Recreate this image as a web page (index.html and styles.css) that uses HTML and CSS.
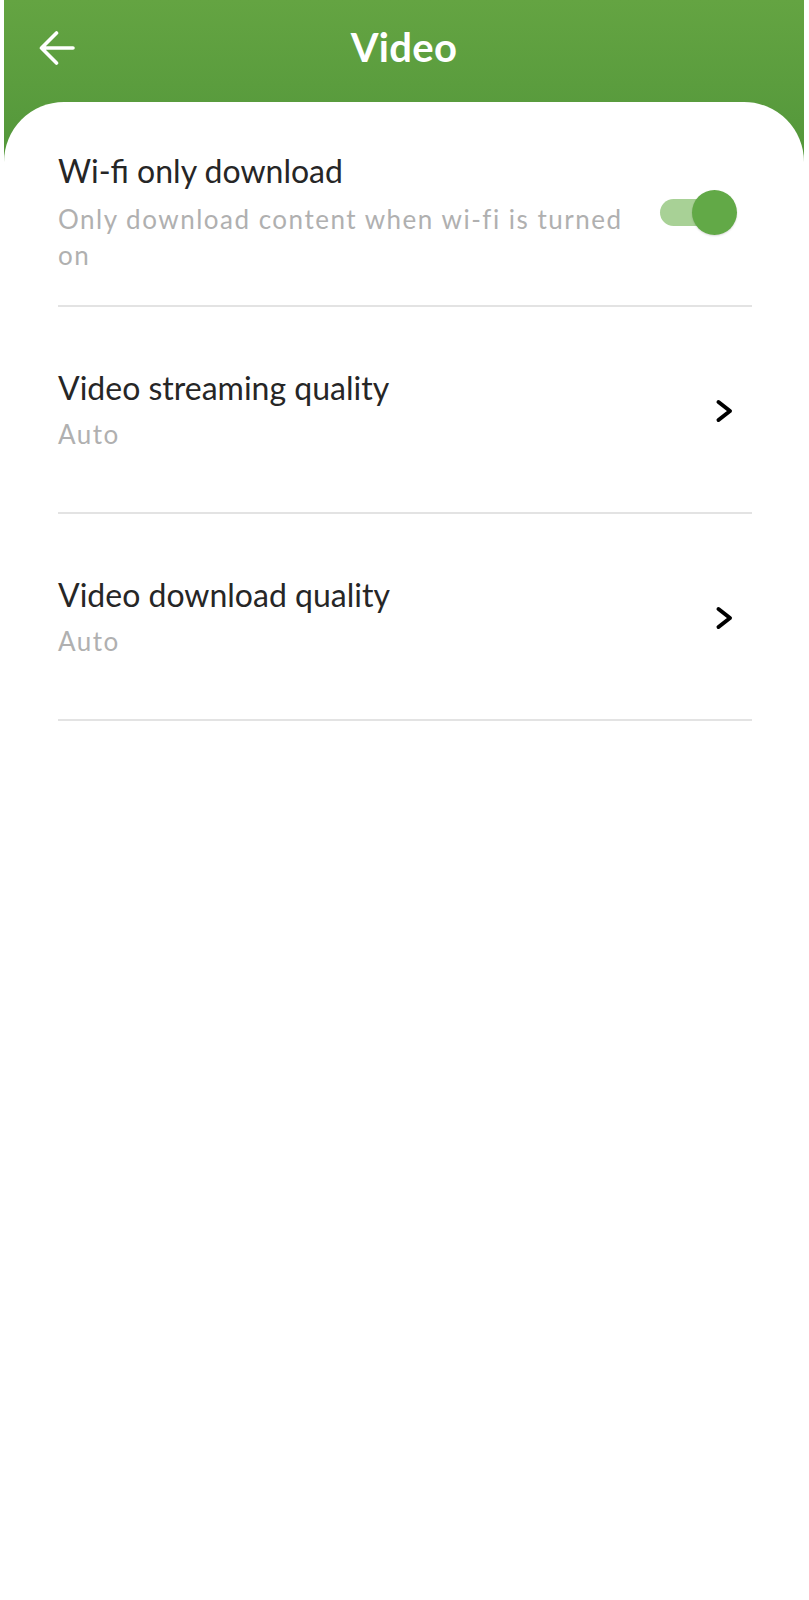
FILE: index.html
```html
<!DOCTYPE html>
<html lang="en">
<head>
<meta charset="utf-8">
<title>Video</title>
<link rel="stylesheet" href="styles.css">
</head>
<body>
<div class="app">
  <header class="topbar">
    <span class="back">
      <svg width="36" height="34" viewBox="0 0 36 34" aria-hidden="true">
        <path d="M2.5 17 H34 M17.5 2 L2.5 17 L17.5 32" fill="none" stroke="#fff" stroke-width="3.6" stroke-linecap="round" stroke-linejoin="round"/>
      </svg>
    </span>
    <h1 class="title">Video</h1>
  </header>
  <main class="card">
    <div class="row row-first">
      <div class="text">
        <div class="row-title">Wi-fi only download</div>
        <div class="row-sub">Only download content when wi-fi is turned on</div>
      </div>
      <div class="toggle"><span class="track"></span><span class="thumb"></span></div>
    </div>
    <div class="row">
      <div class="text">
        <div class="row-title">Video streaming quality</div>
        <div class="row-sub">Auto</div>
      </div>
      <svg class="chev" width="24" height="24" viewBox="0 0 24 24" aria-hidden="true">
        <path d="M5.5 3 L17 12 L5.5 21" fill="none" stroke="#000" stroke-width="4" stroke-linecap="round" stroke-linejoin="round"/>
      </svg>
    </div>
    <div class="row">
      <div class="text">
        <div class="row-title">Video download quality</div>
        <div class="row-sub">Auto</div>
      </div>
      <svg class="chev" width="24" height="24" viewBox="0 0 24 24" aria-hidden="true">
        <path d="M5.5 3 L17 12 L5.5 21" fill="none" stroke="#000" stroke-width="4" stroke-linecap="round" stroke-linejoin="round"/>
      </svg>
    </div>
  </main>
</div>
</body>
</html>
```
FILE: styles.css
```css
html, body {
  margin: 0;
  padding: 0;
  background: #fff;
}
body {
  font-family: "Lato", "Noto Sans", sans-serif;
  padding: 0 5px 0 4px;
}
.app {
  background: linear-gradient(180deg, #64a442 0%, #52963a 100%) no-repeat;
  background-size: 100% 168px;
  min-height: 1600px;
}
.topbar {
  height: 102px;
  display: flex;
  align-items: center;
  padding: 0 71px 0 35px;
  box-sizing: border-box;
}
.back {
  width: 36px;
  height: 34px;
  display: flex;
  margin-top: -6px;
}
.title {
  flex: 1;
  margin: -8px 0 0 0;
  text-align: center;
  color: #fff;
  font-weight: 700;
  font-size: 40px;
  letter-spacing: 0.3px;
}
.card {
  background: #fff;
  border-radius: 60px 60px 0 0;
  padding: 0 52px 0 54px;
  min-height: 1490px;
}
.row {
  display: flex;
  align-items: center;
  padding: 62px 0 60px;
  border-bottom: 2px solid #e3e3e3;
}
.row .row-sub {
  margin-top: 9px;
}
.row-first {
  padding: 50px 0 32px;
}
.row-first .row-sub {
  margin-top: 11px;
}
.text {
  flex: 1;
  min-width: 0;
}
.row-title {
  font-size: 32px;
  line-height: 38px;
  color: #262626;
}
.row-sub {
  font-size: 26px;
  line-height: 36px;
  color: #b0b0b0;
  letter-spacing: 1.5px;
  max-width: 590px;
}
.toggle {
  position: relative;
  width: 77px;
  height: 45px;
  margin-right: 15px;
  margin-left: 16px;
  flex-shrink: 0;
}
.track {
  position: absolute;
  left: 0;
  top: 9px;
  width: 62px;
  height: 27px;
  border-radius: 14px;
  background: #a8d196;
}
.thumb {
  position: absolute;
  right: 0;
  top: 0;
  width: 45px;
  height: 45px;
  border-radius: 50%;
  background: #62a947;
  box-shadow: 0 1px 2px rgba(0,0,0,0.15);
}
.chev {
  margin-right: 15px;
  flex-shrink: 0;
}
```
